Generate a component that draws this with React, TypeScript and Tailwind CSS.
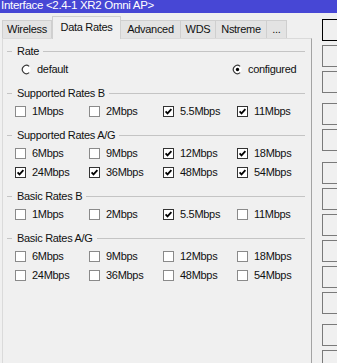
import React from 'react'

const tabs = [
  { label: 'Wireless', w: 'w-[50px]' },
  { label: 'Data Rates', w: 'w-[69px]', active: true },
  { label: 'Advanced', w: 'w-[61px]' },
  { label: 'WDS', w: 'w-[36px]' },
  { label: 'Nstreme', w: 'w-[52px]' },
  { label: '...', w: 'w-[21px]' },
]

type Rate = { label: string; checked: boolean }

function CheckBox({ checked }: { checked: boolean }) {
  return (
    <svg width="11" height="11" viewBox="0 0 11 11" className="shrink-0">
      <rect x="0.5" y="0.5" width="10" height="10" fill="#fff" stroke={checked ? '#333' : '#8a8a8a'} />
      {checked && <path d="M2.6 5.4 L4.5 7.4 L8.4 3.2" fill="none" stroke="#000" strokeWidth="1.8" />}
    </svg>
  )
}

function Radio({ checked }: { checked: boolean }) {
  return (
    <svg width="11" height="11" viewBox="0 0 12 12" className="shrink-0">
      <circle cx="6" cy="6" r="4.5" fill="#fff" />
      <path d="M8.9 2.55 A4.5 4.5 0 1 0 8.9 9.45" fill="none" stroke="#3a3a3a" strokeWidth="1.3" />
      {checked && <circle cx="6" cy="6" r="1.8" fill="#000" />}
    </svg>
  )
}

// cabecera de grupo tipo groupbox
function Group({ title, children }: { title: string; children: React.ReactNode }) {
  return (
    <div className="mb-[6px]">
      <div className="h-[16px] flex items-center ml-[4px] mr-[6px]">
        <span className="w-[5px] h-px bg-[#c4c4c4]" />
        <span className="pl-[5px] pr-[4px] leading-[16px]">{title}</span>
        <span className="flex-1 h-px bg-[#c4c4c4]" />
      </div>
      <div className="mt-[1px]">{children}</div>
    </div>
  )
}

function RateRow({ rates }: { rates: Rate[] }) {
  return (
    <div className="h-[19px] grid grid-cols-[74px_74px_74px_74px] items-center pl-[12px]">
      {rates.map((r) => (
        <div key={r.label} className="flex items-center">
          <CheckBox checked={r.checked} />
          <span className="ml-[6px]">{r.label}</span>
        </div>
      ))}
    </div>
  )
}

const r = (label: string, checked: boolean): Rate => ({ label, checked })

export default function App() {
  return (
    <div className="w-[337px] h-[363px] overflow-hidden bg-[#f0f0f0] text-[11px] tracking-[-0.3px] text-[#111] font-['Liberation_Sans',Arial,sans-serif]">
      <div className="h-[13px] bg-[#4747d5] overflow-hidden text-white">
        <div className="-mt-[2px] pl-[1px] leading-[15px] text-[11.5px]">Interface &lt;2.4-1 XR2 Omni AP&gt;</div>
      </div>

      <div className="flex">
        <div className="w-[320px] pl-[2px] flex flex-col h-[350px]">
          {/* pestañas */}
          <div className="h-[25px] flex items-end">
            {tabs.map((t) =>
              t.active ? (
                <div
                  key={t.label}
                  className={`${t.w} h-[23px] -mb-px relative z-10 bg-[#f0f0f0] border border-b-0 border-[#d0d0d0] flex items-center justify-center pb-[1px]`}
                >
                  {t.label}
                </div>
              ) : (
                <div
                  key={t.label}
                  className={`${t.w} h-[18px] bg-[#e3e3e3] border border-b-0 border-[#cfcfcf] -ml-px first:ml-0 flex items-center justify-center`}
                >
                  {t.label}
                </div>
              )
            )}
          </div>

          {/* panel */}
          <div className="flex-1 border-t border-l border-[#dadada] border-r-[#a3a3a3] border-r pt-[4px]">
            <Group title="Rate">
              <div className="h-[19px] flex items-center">
                <div className="flex items-center ml-[18px] w-[211px]">
                  <Radio checked={false} />
                  <span className="ml-[5px]">default</span>
                </div>
                <div className="flex items-center">
                  <Radio checked />
                  <span className="ml-[5px]">configured</span>
                </div>
              </div>
            </Group>
            <Group title="Supported Rates B">
              <RateRow rates={[r('1Mbps', false), r('2Mbps', false), r('5.5Mbps', true), r('11Mbps', true)]} />
            </Group>
            <Group title="Supported Rates A/G">
              <RateRow rates={[r('6Mbps', false), r('9Mbps', false), r('12Mbps', true), r('18Mbps', true)]} />
              <RateRow rates={[r('24Mbps', true), r('36Mbps', true), r('48Mbps', true), r('54Mbps', true)]} />
            </Group>
            <Group title="Basic Rates B">
              <RateRow rates={[r('1Mbps', false), r('2Mbps', false), r('5.5Mbps', true), r('11Mbps', false)]} />
            </Group>
            <Group title="Basic Rates A/G">
              <RateRow rates={[r('6Mbps', false), r('9Mbps', false), r('12Mbps', false), r('18Mbps', false)]} />
              <RateRow rates={[r('24Mbps', false), r('36Mbps', false), r('48Mbps', false), r('54Mbps', false)]} />
            </Group>
          </div>
        </div>

        {/* botones laterales */}
        <div className="ml-[10px] mt-[6px] flex flex-col gap-[4px]">
          <div className="w-[60px] h-[22px] border border-black bg-[#f0f0f0]" />
          <div className="w-[60px] h-[22px] border border-[#7a7a7a] bg-[#f0f0f0]" />
          <div className="w-[60px] h-[22px] border border-[#7a7a7a] bg-[#f0f0f0]" />
          <div className="w-[60px] h-[22px] border border-[#7a7a7a] bg-[#f0f0f0] mt-[6px]" />
          <div className="w-[60px] h-[22px] border border-[#7a7a7a] bg-[#f0f0f0]" />
          <div className="w-[60px] h-[22px] border border-[#7a7a7a] bg-[#f0f0f0] mt-[7px]" />
          <div className="w-[60px] h-[22px] border border-[#7a7a7a] bg-[#f0f0f0]" />
          <div className="w-[60px] h-[22px] border border-[#7a7a7a] bg-[#f0f0f0]" />
          <div className="w-[60px] h-[22px] border border-[#7a7a7a] bg-[#f0f0f0]" />
          <div className="w-[60px] h-[22px] border border-[#7a7a7a] bg-[#f0f0f0]" />
          <div className="w-[60px] h-[22px] border border-[#7a7a7a] bg-[#f0f0f0]" />
          <div className="w-[60px] h-[22px] border border-[#7a7a7a] bg-[#f0f0f0] mt-[6px]" />
          <div className="w-[60px] h-[22px] border border-[#7a7a7a] bg-[#f0f0f0]" />
        </div>
      </div>
    </div>
  )
}
